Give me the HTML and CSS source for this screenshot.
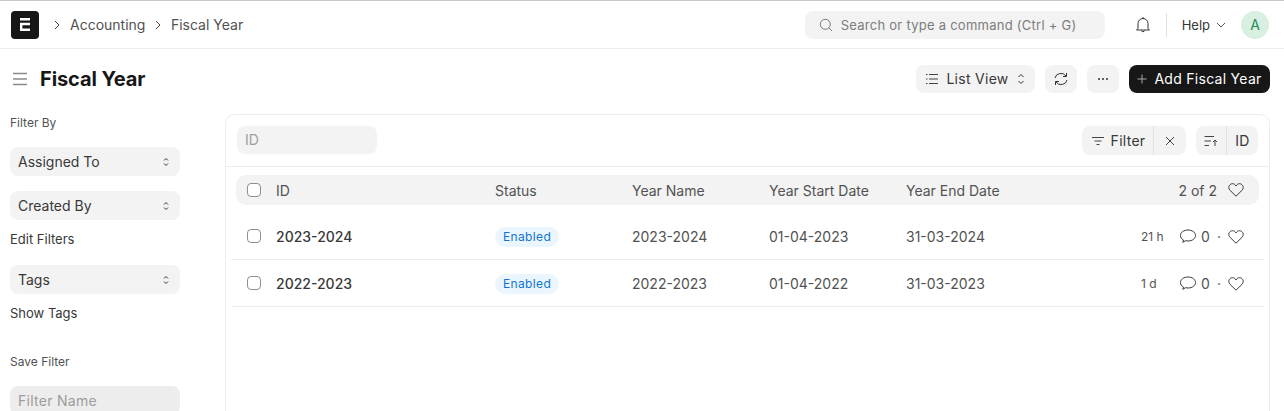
FILE: index.html
```html
<!DOCTYPE html>
<html lang="en">
<head>
<meta charset="utf-8">
<title>Fiscal Year</title>
<link rel="stylesheet" href="styles.css">
</head>
<body>
<header class="navbar">
  <div class="logo"><svg width="10" height="13" viewBox="0 0 10 13"><path d="M0 1.200H10M1.200 11.800V6H10M0 11.800H10" fill="none" stroke="#fff" stroke-width="2.400"/></svg></div>
  <svg class="crumb-chev first" width="8" height="10" viewBox="0 0 8 10"><path d="M2 1l4 4-4 4" fill="none" stroke="#444" stroke-width="1"/></svg>
  <span class="crumb">Accounting</span>
  <svg class="crumb-chev" width="8" height="10" viewBox="0 0 8 10"><path d="M2 1l4 4-4 4" fill="none" stroke="#444" stroke-width="1"/></svg>
  <span class="crumb">Fiscal Year</span>
  <div class="search">
    <svg width="14" height="14" viewBox="0 0 14 14"><circle cx="6.3" cy="6.3" r="5" fill="none" stroke="#777" stroke-width="1"/><path d="M10 10l3 3" stroke="#777" stroke-width="1"/></svg>
    <span>Search or type a command (Ctrl + G)</span>
  </div>
  <svg class="bell" width="16" height="18" viewBox="0 0 16 18"><path d="M3 12.5V7.5a5 5 0 0 1 10 0v5l1.5 1.5h-13zM6.3 14.5a1.8 1.8 0 0 0 3.4 0M8 1v1.5" fill="none" stroke="#333" stroke-width="1"/></svg>
  <div class="nav-sep"></div>
  <span class="help">Help</span>
  <svg class="help-chev" width="10" height="6" viewBox="0 0 10 6"><path d="M1 1l4 4 4-4" fill="none" stroke="#555" stroke-width="1"/></svg>
  <div class="avatar">A</div>
</header>

<div class="page-head">
  <svg class="menu" width="14" height="14" viewBox="0 0 14 14"><path d="M0 1.5H14M0 7H14M0 12.5H14" stroke="#8a8a8a" stroke-width="1.4"/></svg>
  <h1>Fiscal Year</h1>
  <div class="actions">
    <button class="btn view">
      <svg width="12" height="12" viewBox="0 0 12 12"><path d="M3 1.500H12M3 6H12M3 10.500H12M0 1.500H1.500M0 6H1.500M0 10.500H1.500" stroke="#444" stroke-width="1"/></svg>
      <span>List View</span>
      <svg width="8" height="12" viewBox="0 0 8 12"><path d="M1.500 4L4 1.500 6.500 4M1.500 8L4 10.500 6.500 8" fill="none" stroke="#333" stroke-width="1"/></svg>
    </button>
    <button class="btn square">
      <svg width="16" height="14" viewBox="0 0 16 14"><path d="M2 6a6 5.500 0 0 1 11-2M14 8a6 5.500 0 0 1-11 2M13.500 1v3.500H10M2.500 13V9.500H6" fill="none" stroke="#333" stroke-width="1"/></svg>
    </button>
    <button class="btn square">
      <svg width="12" height="4" viewBox="0 0 12 4"><circle cx="2" cy="2" r="1" fill="#333"/><circle cx="6" cy="2" r="1" fill="#333"/><circle cx="10" cy="2" r="1" fill="#333"/></svg>
    </button>
    <button class="btn primary">
      <svg width="10" height="10" viewBox="0 0 10 10"><path d="M5 .5V9.500M.5 5H9.500" stroke="#a8a8a8" stroke-width="1"/></svg>
      <span>Add Fiscal Year</span>
    </button>
  </div>
</div>

<main class="main">
  <aside class="sidebar">
    <div class="side-label">Filter By</div>
    <div class="select first-select"><span>Assigned To</span><svg width="8" height="12" viewBox="0 0 8 12"><path d="M2 4.500L4 2.500 6 4.500M2 7.500L4 9.500 6 7.500" fill="none" stroke="#333" stroke-width="1"/></svg></div>
    <div class="select second-select"><span>Created By</span><svg width="8" height="12" viewBox="0 0 8 12"><path d="M2 4.500L4 2.500 6 4.500M2 7.500L4 9.500 6 7.500" fill="none" stroke="#333" stroke-width="1"/></svg></div>
    <div class="side-link edit">Edit Filters</div>
    <div class="select tags-select"><span>Tags</span><svg width="8" height="12" viewBox="0 0 8 12"><path d="M2 4.500L4 2.500 6 4.500M2 7.500L4 9.500 6 7.500" fill="none" stroke="#333" stroke-width="1"/></svg></div>
    <div class="side-link show">Show Tags</div>
    <div class="side-label save">Save Filter</div>
    <div class="filter-name">Filter Name</div>
  </aside>

  <section class="card">
    <div class="toolbar">
      <div class="id-input">ID</div>
      <div class="group filter-group">
        <div class="seg filter-seg">
          <svg width="12" height="10" viewBox="0 0 12 10"><path d="M0 1.500H12M2.500 5H9.500M4.500 8.500H7.500" stroke="#444" stroke-width="1"/></svg>
          <span>Filter</span>
        </div>
        <div class="seg clear-seg"><svg width="10" height="10" viewBox="0 0 10 10"><path d="M1 1l8 8M9 1l-8 8" stroke="#444" stroke-width="1"/></svg></div>
      </div>
      <div class="group sort-group">
        <div class="seg sort-seg"><svg width="14" height="12" viewBox="0 0 14 12"><path d="M.5 1.500H10M.5 6H7M.5 10.500H5M11 11V5M9 7l2-2 2 2" fill="none" stroke="#444" stroke-width="1"/></svg></div>
        <div class="seg id-seg">ID</div>
      </div>
    </div>

    <div class="list-head">
      <span class="check"></span>
      <span class="col c-id">ID</span>
      <span class="col c-status">Status</span>
      <span class="col c-name">Year Name</span>
      <span class="col c-start">Year Start Date</span>
      <span class="col c-end">Year End Date</span>
      <span class="count">2 of 2</span>
      <svg class="heart" width="16" height="14" viewBox="0 0 16 14"><path d="M8 13.200L1.500 6.800C-.4 3.600 1.900 .7 4.500 .7 6 .7 7.300 1.600 8 3 8.700 1.600 10 .7 11.500 .7 14.100 .7 16.400 3.600 14.500 6.800Z" fill="none" stroke="#383838" stroke-width="1"/></svg>
    </div>

    <div class="row">
      <span class="check"></span>
      <span class="col c-id title">2023-2024</span>
      <span class="col c-status"><span class="pill">Enabled</span></span>
      <span class="col c-name">2023-2024</span>
      <span class="col c-start">01-04-2023</span>
      <span class="col c-end">31-03-2024</span>
      <span class="age">21 h</span>
      <svg class="comment" width="16" height="14" viewBox="0 0 16 14"><path d="M3.500 11C1.500 10 .5 8.500 .5 6.500 .5 3.300 3.800 1 8 1s7.500 2.300 7.500 5.500S12.200 12 8 12c-.9 0-1.700-.1-2.500-.3L2.800 13.300Z" fill="none" stroke="#383838" stroke-width="1"/></svg>
      <span class="zero">0</span>
      <span class="dot">·</span>
      <svg class="heart-row" width="16" height="14" viewBox="0 0 16 14"><path d="M8 13.200L1.500 6.800C-.4 3.600 1.900 .7 4.500 .7 6 .7 7.300 1.600 8 3 8.700 1.600 10 .7 11.500 .7 14.100 .7 16.400 3.600 14.500 6.800Z" fill="none" stroke="#383838" stroke-width="1"/></svg>
    </div>

    <div class="row">
      <span class="check"></span>
      <span class="col c-id title">2022-2023</span>
      <span class="col c-status"><span class="pill">Enabled</span></span>
      <span class="col c-name">2022-2023</span>
      <span class="col c-start">01-04-2022</span>
      <span class="col c-end">31-03-2023</span>
      <span class="age">1 d</span>
      <svg class="comment" width="16" height="14" viewBox="0 0 16 14"><path d="M3.500 11C1.500 10 .5 8.500 .5 6.500 .5 3.300 3.800 1 8 1s7.500 2.300 7.500 5.500S12.200 12 8 12c-.9 0-1.700-.1-2.500-.3L2.800 13.300Z" fill="none" stroke="#383838" stroke-width="1"/></svg>
      <span class="zero">0</span>
      <span class="dot">·</span>
      <svg class="heart-row" width="16" height="14" viewBox="0 0 16 14"><path d="M8 13.200L1.500 6.800C-.4 3.600 1.900 .7 4.500 .7 6 .7 7.300 1.600 8 3 8.700 1.600 10 .7 11.500 .7 14.100 .7 16.400 3.600 14.500 6.800Z" fill="none" stroke="#383838" stroke-width="1"/></svg>
    </div>
  </section>
</main>
</body>
</html>
```

FILE: styles.css
```css
* { box-sizing: border-box; }
html, body { margin: 0; height: 411px; overflow: hidden; background: #fff; }
body { font-family: Inter, "Liberation Sans", sans-serif; color: #383838; font-size: 14px; }

.navbar { display: flex; align-items: center; height: 49px; padding: 0 15px 0 11px; border-top: 1px solid #c9c9c9; border-bottom: 1px solid #ededed; }
.logo { width: 28px; height: 28px; border-radius: 4px; background: #171717; display: flex; align-items: center; justify-content: center; }
.crumb-chev { margin: 0 8.500px 0 9px; }
.crumb-chev.first { margin-left: 14px; margin-right: 9px; }
.crumb { font-size: 14px; color: #525252; }
.search { display: flex; align-items: center; gap: 8px; width: 300px; height: 28px; margin-left: auto; padding-left: 14px; border-radius: 8px; background: #f3f3f3; color: #7c7c7c; font-size: 13px; letter-spacing: 0.02em; }
.bell { margin-left: 30px; }
.nav-sep { width: 1px; height: 24px; margin: 0 15px 0 15px; background: #e2e2e2; }
.help { font-size: 13px; color: #383838; }
.help-chev { margin: 0 15px 0 6px; }
.avatar { width: 28px; height: 28px; border-radius: 50%; background: #d7f0e1; color: #1f8a5c; font-size: 14px; display: flex; align-items: center; justify-content: center; }

.page-head { display: flex; align-items: center; height: 60px; padding: 0 14px 0 13px; }
.page-head .menu { margin-right: 13px; }
.page-head h1 { margin: 0; font-size: 20px; font-weight: 700; color: #171717; letter-spacing: -0.005em; }
.actions { display: flex; gap: 10px; margin-left: auto; }
.btn { display: flex; align-items: center; justify-content: center; height: 28px; border: 0; border-radius: 8px; background: #f3f3f3; font: inherit; letter-spacing: 0.02em; color: #383838; padding: 0; }
.btn span { margin-top: -2px; }
.view { width: 119px; gap: 8px; }
.square { width: 32px; }
.primary { width: 141px; gap: 7px; background: #171717; color: #fff; }

.main { display: flex; align-items: flex-start; padding: 5px 14px 0 10px; }
.sidebar { width: 170px; flex: none; margin-top: 1px; margin-right: 45px; }
.side-label { font-size: 12px; line-height: 16px; color: #525252; }
.select { display: flex; align-items: center; justify-content: space-between; height: 29px; padding: 0 10px 0 8px; border-radius: 8px; background: #f3f3f3; }
.first-select { margin-top: 16px; }
.second-select { margin-top: 15px; }
.side-link { font-size: 13px; line-height: 16px; }
.edit { margin-top: 11px; }
.tags-select { margin-top: 18px; }
.show { margin-top: 11px; }
.save { margin-top: 33px; }
.filter-name { height: 29px; margin-top: 16px; padding: 6px 8px; border-radius: 8px; background: #ededed; color: #9c9c9c; letter-spacing: 0.02em; }

.card { flex: 1; height: 320px; border: 1px solid #ededed; border-radius: 10px 10px 0 0; }
.toolbar { display: flex; align-items: flex-start; height: 52px; padding: 11px 11px 0; border-bottom: 1px solid #ededed; }
.id-input { width: 140px; height: 28px; padding: 5px 8px; border-radius: 8px; background: #f3f3f3; color: #a0a0a0; }
.group { display: flex; height: 29px; border-radius: 8px; background: #f3f3f3; letter-spacing: 0.02em; }
.filter-group { margin-left: auto; }
.sort-group { margin-left: 10px; }
.seg { display: flex; align-items: center; justify-content: center; }
.filter-seg { width: 72px; gap: 7px; padding-left: 2px; border-right: 1px solid #e2e2e2; }
.clear-seg { width: 32px; }
.sort-seg { width: 31px; border-right: 1px solid #e2e2e2; }
.id-seg { width: 31px; }

.list-head { display: flex; align-items: center; height: 30px; margin: 8px 10px 0 10px; padding-left: 11px; border-radius: 10px; background: #f3f3f3; color: #525252; }
.row { display: flex; align-items: center; height: 47px; margin: 7px 5px 0 5px; padding: 1px 0 0 16px; border-bottom: 1px solid #ededed; color: #525252; }
.list-head + .row { margin-top: 8px; }
.row + .row { margin-top: 0; }
.check { flex: none; width: 14px; height: 14px; border: 1px solid #8f8f8f; border-radius: 4px; background: #fff; margin-right: 15px; }
.row .check { margin-bottom: 2px; }
.col { flex: none; }
.c-id { width: 219px; }
.c-status { width: 137px; }
.c-name { width: 137px; }
.c-start { width: 137px; }
.c-end { width: 137px; }
.title { font-weight: 500; color: #383838; }
.pill { display: inline-block; height: 20px; padding: 0 8px; border-radius: 10px; background: #eaf5fe; color: #0f75d1; font-size: 12px; line-height: 20px; letter-spacing: 0.03em; vertical-align: middle; }
.count { margin-left: auto; }
.heart { margin: 0 15px 0 11px; flex: none; }
.age { margin-left: auto; width: 39px; font-size: 12px; color: #525252; }
.comment { flex: none; margin-bottom: 2px; }
.zero { width: 9px; margin-left: 5px; }
.dot { width: 18px; text-align: center; }
.heart-row { flex: none; margin-right: 20px; }
```
